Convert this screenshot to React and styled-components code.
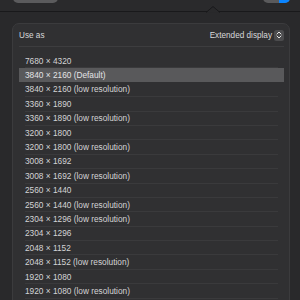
import React from 'react'
import styled, { createGlobalStyle } from 'styled-components'

const GlobalStyle = createGlobalStyle`
  html, body {
    margin: 0;
    padding: 0;
    background: #2a2a2c;
    font-family: "Liberation Sans", Arial, sans-serif;
    overflow: hidden;
  }
`

const Page = styled.div`
  width: 300px;
  height: 300px;
  overflow: hidden;
  display: flex;
  flex-direction: column;
`

const TopBar = styled.div`
  height: 11px;
  flex: none;
  overflow: hidden;
`

const ToolRow = styled.div`
  display: flex;
  align-items: flex-end;
  height: 20px;
  margin-top: -17.5px;
  padding: 0 10px 0 13px;
`

const GrayButton = styled.div`
  width: 45px;
  height: 20px;
  border-radius: 5px;
  background: #5b5b5d;
`

const Label = styled.span`
  font-size: 10px;
  line-height: 12px;
  margin-bottom: 3.5px;
  color: #bdbdbf;
  margin-left: ${p => p.gap}px;
  white-space: nowrap;
`

const Toggle = styled.div`
  margin-left: auto;
  width: 27px;
  height: 20px;
  border-radius: 5px;
  background: #5a5a5c;
  display: flex;
  justify-content: flex-end;
  overflow: hidden;
`

const ToggleKnob = styled.div`
  width: 11px;
  background: #0a84ff;
`

const Popover = styled.div`
  flex: 1;
  position: relative;
  border-top: 1px solid #19191b;
  background: #29292b;
  padding: 11px 10px 0 12px;
`

const Arrow = styled.svg`
  position: absolute;
  top: -6px;
  left: 206px;
`

const Card = styled.div`
  background: #303032;
  border: 1px solid #3b3b3d;
  border-radius: 7px;
  padding: 0 5px 0 6px;
  height: 320px;
`

const HeaderRow = styled.div`
  display: flex;
  align-items: center;
  height: 22px;
  border-bottom: 1px solid #3d3d3f;
  font-size: 8.2px;
  color: #d8d8da;
`

const Select = styled.div`
  margin-left: auto;
  display: flex;
  align-items: center;
  gap: 2px;
`

const Stepper = styled.div`
  width: 10px;
  height: 11px;
  border-radius: 2.5px;
  background: #4c4c4e;
  display: flex;
  align-items: center;
  justify-content: center;
`

const List = styled.div`
  padding-top: 6.5px;
`

const Row = styled.div`
  height: 14.4px;
  display: flex;
  align-items: center;
  padding-left: 6px;
  font-size: 8.3px;
  color: ${p => (p.selected ? '#e4e4e6' : '#d4d4d6')};
  background: ${p => (p.selected ? '#59595b' : 'transparent')};
  position: relative;
  white-space: nowrap;

  &::after {
    content: '';
    position: absolute;
    left: 6px;
    right: 6px;
    bottom: -0.5px;
    height: 1px;
    background: ${p => (p.selected ? 'transparent' : '#3a3a3c')};
  }
`

const modes = [
  '7680 × 4320',
  '3840 × 2160 (Default)',
  '3840 × 2160 (low resolution)',
  '3360 × 1890',
  '3360 × 1890 (low resolution)',
  '3200 × 1800',
  '3200 × 1800 (low resolution)',
  '3008 × 1692',
  '3008 × 1692 (low resolution)',
  '2560 × 1440',
  '2560 × 1440 (low resolution)',
  '2304 × 1296 (low resolution)',
  '2304 × 1296',
  '2048 × 1152',
  '2048 × 1152 (low resolution)',
  '1920 × 1080',
  '1920 × 1080 (low resolution)',
]

const App = () => (
  <Page>
    <GlobalStyle />
    <TopBar>
      <ToolRow>
        <GrayButton />
        <Label gap={22}>Display apps</Label>
        <Label gap={34}>Display apps</Label>
        <Toggle>
          <ToggleKnob />
        </Toggle>
      </ToolRow>
    </TopBar>
    <Popover>
      <Arrow width="14" height="7" viewBox="0 0 14 7">
        <path d="M0 6.5 L7 0.5 L14 6.5 Z" fill="#29292b" />
        <path d="M0 6.5 L7 0.5 L14 6.5" fill="none" stroke="#19191b" strokeWidth="1" />
      </Arrow>
      <Card>
        <HeaderRow>
          Use as
          <Select>
            Extended display
            <Stepper>
              <svg width="6" height="8" viewBox="0 0 6 8">
                <path d="M1 3 L3 1 L5 3 M1 5 L3 7 L5 5" fill="none" stroke="#e6e6e6" strokeWidth="1" strokeLinecap="round" strokeLinejoin="round" />
              </svg>
            </Stepper>
          </Select>
        </HeaderRow>
        <List>
          {modes.map((m, i) => (
            <Row key={m} selected={i === 1}>
              {m}
            </Row>
          ))}
        </List>
      </Card>
    </Popover>
  </Page>
)

export default App
